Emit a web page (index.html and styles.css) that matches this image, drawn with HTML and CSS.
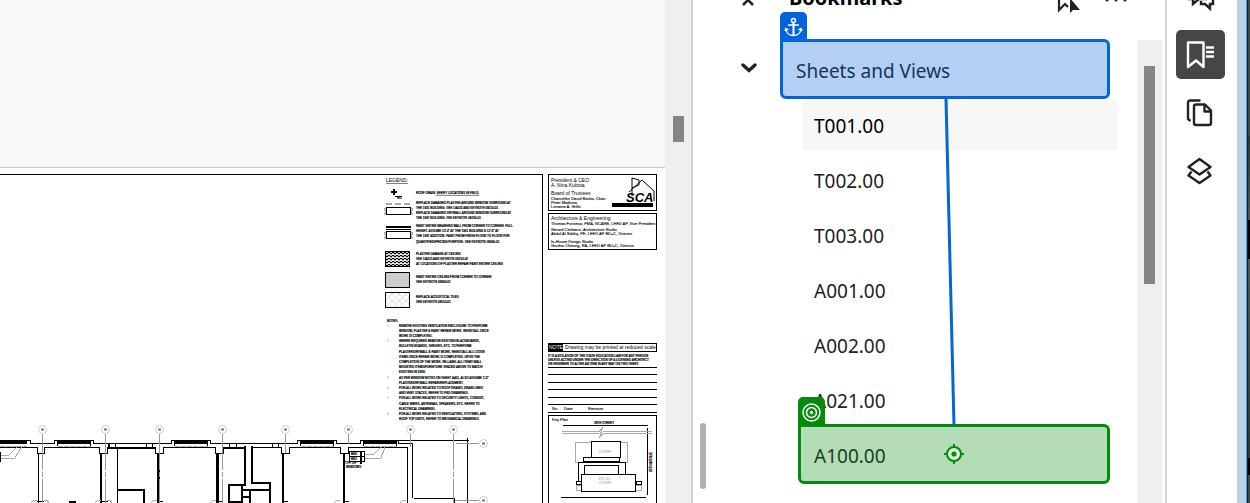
FILE: index.html
```html
<!DOCTYPE html>
<html lang="en">
<head>
<meta charset="utf-8">
<title>Bookmarks</title>
<link rel="stylesheet" href="styles.css">
</head>
<body>
<div class="app">
  <main class="document">
    <div class="sheet">
      <svg class="drawing" width="665" height="335" viewBox="0 168 665 335" role="img" aria-label="Construction drawing sheet">
        <defs>
          <pattern id="plaster" width="4" height="3" patternUnits="userSpaceOnUse"><path d="M0 .5h2M2 1.5h2" stroke="#000" stroke-width="1.4"/></pattern>
          <pattern id="tile" width="7" height="7" patternUnits="userSpaceOnUse"><path d="M0 0l7 7M7 0l-7 7" stroke="#ddd" stroke-width="1"/></pattern>
        </defs>
        <g class="ink">
          <path d="M0 174.5H542.5V503"/>
          <path d="M548.5 174.5h108v36h-108zM548.5 213.5h108v36h-108zM548.5 343.5h108v8h-108zM548.5 503v-87.500h108V503"/>
          <path d="M548 367.500h109M548 374.500h109M548 382.500h109M548 389.500h109M548 397.500h109M548 404.500h109M548 412.500h109"/>
        </g>

        <g class="ink">
          <path d="M386.500 207.500h24v7h-24zM386.500 231.500h24v7h-24zM386 229.500h25"/>
          <path class="heavy" d="M386 227h25M391 192h6M394 189v6"/>
          <path d="M395 196.500h7"/>
          <path class="gray heavy" d="M386 204h25" stroke-dasharray="6 3"/>
          <path class="gray" d="M386 208l-2 1 2 3-2 3M411 208l2 1-2 3 2 3M386 232l-2 1 2 3-2 3M411 232l2 1-2 3 2 3"/>
          <rect x="385.500" y="251.500" width="24" height="15" fill="url(#plaster)"/>
          <rect x="385.500" y="272.500" width="24" height="15" fill="#ccc"/>
          <rect x="385.500" y="292.500" width="24" height="15" fill="url(#tile)"/>
        </g>
        <text class="label" x="386" y="182" text-decoration="underline">LEGEND:</text>
        <text class="tiny" x="397" y="199">RD</text>
        <text class="tiny"><tspan x="416" y="194">ROOF DRAIN. </tspan><tspan text-decoration="underline">VERIFY LOCATIONS IN FIELD.</tspan></text>
        <text class="tiny">
          <tspan x="416" y="204">REPLACE DAMAGED PLASTER AROUND WINDOW SURROUND AT</tspan>
          <tspan x="416" y="209">THE 1931 BUILDING. SEE 1/A023 AND KEYNOTE 09210-01</tspan>
          <tspan x="416" y="214">REPLACE DAMAGED DRYWALL AROUND WINDOW SURROUND AT</tspan>
          <tspan x="416" y="219">THE 1997 BUILDING. SEE KEYNOTE 09250-01</tspan>
          <tspan x="416" y="227">PAINT ENTIRE WEARHED WALL FROM CORNER TO CORNER. FULL</tspan>
          <tspan x="416" y="232">HEIGHT. ASSUME 13'-0" AT THE 1931 BUILDING &amp; 12'-6" AT</tspan>
          <tspan x="416" y="237">THE 1997 ADDITION. PAINT FROM FINISH FLOOR TO FLOOR FOR</tspan>
          <tspan x="416" y="243">QUANTIFIED/PRICING PURPOSE. SEE KEYNOTE 09900-01</tspan>
          <tspan x="416" y="255">PLASTER DAMAGE AT CEILING</tspan>
          <tspan x="416" y="260">SEE 1/A023 AND KEYNOTE 09210-02</tspan>
          <tspan x="416" y="265">AT LOCATIONS OF PLASTER REPAIR PAINT ENTIRE CEILING</tspan>
          <tspan x="416" y="278">PAINT ENTIRE CEILING FROM CORNER TO CORNER</tspan>
          <tspan x="416" y="283">SEE KEYNOTE 09900-01</tspan>
          <tspan x="416" y="298">REPLACE ACOUSTICAL TILES</tspan>
          <tspan x="416" y="303">SEE KEYNOTE 09510-01</tspan>
        </text>
        <text class="tiny">
          <tspan x="387" y="322">NOTES:</tspan>
          <tspan x="399" y="327">REMOVE EXISTING VENTILATION ENCLOSURE TO PERFORM</tspan>
          <tspan x="399" y="332">WINDOW, PLASTER &amp; PAINT REPAIR WORK. REINSTALL ONCE</tspan>
          <tspan x="399" y="337">WORK IS COMPLETED.</tspan>
          <tspan x="399" y="342">WHERE REQUIRED REMOVE EXISTING BLACKBOARDS,</tspan>
          <tspan x="399" y="347">BULLETIN BOARDS, SHELVES, ETC. TO PERFORM</tspan>
          <tspan x="399" y="353">PLASTER/DRYWALL &amp; PAINT WORK. REINSTALL ALL LOOSE</tspan>
          <tspan x="399" y="358">ITEMS ONCE REPAIR WORK IS COMPLETED. UPON THE</tspan>
          <tspan x="399" y="363">COMPLETION OF THE WORK. RE-LABEL ALL ITEMS WALL</tspan>
          <tspan x="399" y="368">MOUNTED ITEMS/FURNITURE SPACED ABOVE TO MATCH</tspan>
          <tspan x="399" y="373">EXISTING IN KIND.</tspan>
          <tspan x="399" y="379">AS PER WINDOW NOTES ON SHEET A401, ALSO ASSUME 1'-0"</tspan>
          <tspan x="399" y="384">PLASTER/DRYWALL REPAIR/REPLACEMENT.</tspan>
          <tspan x="399" y="389">FOR ALL WORK RELATED TO ROOF DRAINS, DRAIN LINES</tspan>
          <tspan x="399" y="394">AND VENT STACKS, REFER TO P&amp;D DRAWINGS.</tspan>
          <tspan x="399" y="399">FOR ALL WORK RELATED TO SECURITY LIGHTS, CONDUIT,</tspan>
          <tspan x="399" y="405">CABLE WIRES, ANTENNAS, SPEAKERS, ETC. REFER TO</tspan>
          <tspan x="399" y="410">ELECTRICAL DRAWINGS.</tspan>
          <tspan x="399" y="415">FOR ALL WORK RELATED TO VENTILATORS, SYSTEMS, AND</tspan>
          <tspan x="399" y="420">ROOF TOP UNITS, REFER TO MECHANICAL DRAWINGS.</tspan>
        </text>
        <text class="tiny faint"><tspan x="387" y="327">1.</tspan><tspan x="387" y="342">2.</tspan><tspan x="387" y="379">3.</tspan><tspan x="387" y="389">4.</tspan><tspan x="387" y="399">5.</tspan><tspan x="387" y="415">6.</tspan></text>

        <text class="small">
          <tspan x="551" y="182">President &amp; CEO</tspan><tspan x="551" y="187">A. Nina Kubota</tspan>
          <tspan x="551" y="195">Board of Trustees</tspan>
        </text>
        <text class="credit">
          <tspan x="551" y="200">Chancellor David Banks, Chair</tspan>
          <tspan x="551" y="204">Peter Madonia</tspan><tspan x="551" y="208">Lorraine A. Grillo</tspan>
        </text>
        <path d="M632 196V178l7 2v5l-7 3M629 192l13-12 12 11v10" fill="none" stroke="#000"/>
        <text class="logo" x="626" y="202">SCA</text>
        <path d="M612 203h41v4h-41z"/>
        <text class="small" x="551" y="220">Architecture &amp; Engineering</text>
        <text class="credit">
          <tspan x="551" y="225">Thomas Fonseca, PMA, NCARB, LEED AP, Vice President</tspan>
          <tspan x="551" y="231">Gerard Cimbarro, Architecture Studio</tspan>
          <tspan x="551" y="235">Abdul Al Siddiq, PE, LEED AP BD+C, Director</tspan>
          <tspan x="551" y="243">In-House Design Studio</tspan>
          <tspan x="551" y="247">Gordon Cheung, RA, LEED AP BD+C, Director</tspan>
        </text>
        <path d="M549 344h14v7h-14z"/>
        <text class="label"><tspan x="549" y="349" fill="#fff">NOTE</tspan><tspan x="565" y="349">Drawing may be printed at reduced scale</tspan></text>
        <text class="tiny">
          <tspan x="548" y="357">IT IS A VIOLATION OF THE STATE EDUCATION LAW FOR ANY PERSON</tspan>
          <tspan x="548" y="361">UNLESS ACTING UNDER THE DIRECTION OF A LICENSED ARCHITECT</tspan>
          <tspan x="548" y="365">OR ENGINEER TO ALTER AN ITEM IN ANY WAY ON THIS SHEET.</tspan>
        </text>
        <text class="credit">
          <tspan x="552" y="410">No.</tspan><tspan x="564" y="410">Date</tspan><tspan x="588" y="410">Revision</tspan>
          <tspan x="552" y="421">Key Plan</tspan>
        </text>
        <text class="tiny" x="594" y="424">39TH STREET</text>
        <text class="tiny" transform="translate(652 472) rotate(-90)">35TH AVENUE</text>

        <g class="ink">
          <path d="M563 425.500h84.500M647.500 428v67M561 497.500h85"/>
          <path class="gray" d="M562 431.500h37l3-3-2 8 3-3h49M562 433.500h37M603 431.500h49M591 442.500h-15.500v19.500h7M621 442.500h6.500v19.500h-7"/>
          <path d="M591.500 441.500h29v16h-29zM583.500 457.500h36v4h-36zM578.500 481v-19h47v12M584.500 465.500h34v9h-34zM581.500 474.500h54v17h-54zM576 481.500h5v3h-5M576 481v4M641 481.500h-5v3h5v-4"/>
          <path class="gray" d="M581 485h-5v5h5M636 485h5v5h-5"/>
        </g>
        <text class="tiny faint"><tspan x="599" y="453">5 STORY</tspan><tspan x="599" y="480">P.S. 151</tspan><tspan x="599" y="484">4 STORY</tspan></text>

        <g class="ink">
          <path d="M0 440.500h30.500v3h24v-3h39v3h78v-3h39v3h87v-3h39v3h24v-3h38v3h14v54.500"/>
          <path d="M0 447.500h37.500v6h7v-6h55v6h8v-6h48v6h8v-6h52v6h8v-6h21M251 447.500h30.500v6h8v-6h51v6h8v-6h59V503M398.500 440.500h70M467.500 438v65M413.500 498.500h41v5"/>
          <path d="M117.500 448v55M108 448.500h48M224 448.500h21M38.500 453v50M108 444v4M115.500 443.500v4h-6v-4M152.500 443.500v4h-6v-4M236.500 443.500v4h-7v-4M278.500 443.500v4h-6v-4"/>
          <path class="wall" d="M158.500 453v50M217.500 453v50M0 442.500h27M57 442.500h34M174 442.500h34M300 442.500h34M363 442.500h34"/>
          <path class="heavy" d="M101 453v50M283 453v50M344 453v50M118 490h26v13M245 446v39h-16v17h13v-17M252 446v37h18v20M242 490h28M242 497h8v-7M250 497v6M0 452v10M69 502h7"/>
          <path class="gray" d="M0 446.500h27M58 446.500h33M175 446.500h33M301 446.500h33M364 446.500h33" stroke-dasharray="5 1"/>
          <path d="M57.500 443v3M90.500 443v3M174.500 443v3M207.500 443v3M300.500 443v3M333.500 443v3M363.500 443v3M396.500 443v3"/>
          <path class="gray" d="M18 446l-9 9H1M22 446l-7 12H1M381 447l-7 7h-9M385 447l-4 11h-16"/>
          <path d="M349.500 451.500h15v10h-15zM349 456.500h15M361.500 452v12M360.500 452v12M37 501.500h7M102 501.500h6M158 501.500h5M217 501.500h5M283 501.500h5M344 501.500h5"/>
          <path class="gray" d="M31 503q2-3 6-3M44 500q4 0 5 3M95 503q2-3 6-3M107 500q4 0 5 3M151 503q2-3 6-3M210 503q2-3 6-3M334 503q2-3 6-3M400 503q2-3 6-3"/>
        </g>
        <text class="tiny"><tspan x="351" y="455">M60</tspan><tspan x="351" y="460">M62</tspan><tspan x="345" y="464">TYP. OF</tspan><tspan x="346" y="468">WINDOWS</tspan></text>
        <g class="grid">
          <path d="M42.500 434v69M105.500 434v69M159.500 434v69M222.500 434v69M453.500 434v69" stroke-dasharray="36 2 5 2"/>
          <path d="M285.500 434v19M348.500 434v10M410.500 434v13M456 443.500h23M455 500.500h24"/>
          <g class="bubble"><circle cx="42.500" cy="429.500" r="4"/><circle cx="105.500" cy="429.500" r="4"/><circle cx="159.500" cy="429.500" r="4"/><circle cx="222.500" cy="429.500" r="4"/><circle cx="285.500" cy="429.500" r="4"/><circle cx="348.500" cy="429.500" r="4"/><circle cx="410.500" cy="429.500" r="4"/><circle cx="453.500" cy="429.500" r="4"/><circle cx="483.500" cy="443.500" r="4"/><circle cx="483.500" cy="500.500" r="4"/></g>
          <path class="mark" d="M41 429.500h3M104 429.500h3M158 429.500h3M221 429.500h3M284 429.500h3M347 429.500h3M409 429.500h3M452 429.500h3M482 443.500h3M482 500.500h3"/>
        </g>
      </svg>
    </div>
    <div class="doc-scroll"><div class="doc-thumb"></div></div>
  </main>

  <aside class="panel">
    <header class="panel-header">
      <button class="icon-button close" aria-label="Close"><svg width="14" height="14" viewBox="0 0 14 14"><path d="M2 2l10 10M12 2L2 12" fill="none" stroke="#222" stroke-width="2.500"/></svg></button>
      <h2 class="title">Bookmarks</h2>
      <button class="icon-button find" aria-label="Find current bookmark"><svg width="24" height="28" viewBox="0 0 24 28"><path d="M11 21l-3-3-6 6V3h16v9" fill="none" stroke="#222" stroke-width="2.200"/><path d="M13 12v15l3-3h7z" fill="#222"/></svg></button>
      <button class="icon-button more" aria-label="More options"><svg width="22" height="4" viewBox="0 0 22 4" fill="#222"><circle cx="2" cy="2" r="1.600"/><circle cx="11" cy="2" r="1.600"/><circle cx="20" cy="2" r="1.600"/></svg></button>
    </header>
    <div class="panel-body">
      <div class="handle"></div>
      <ul class="tree">
        <li class="row root">
          <button class="icon-button toggle" aria-label="Collapse Sheets and Views"><svg width="16" height="10" viewBox="0 0 16 10"><path d="M2 2l6 5.500L14 2" fill="none" stroke="#222" stroke-width="3.400" stroke-linecap="round"/></svg></button>
          <a class="entry" href="#sheets">Sheets and Views</a>
          <div class="mark-box anchor-box"><span class="badge"><svg width="19" height="21" viewBox="0 0 19 21" fill="none" stroke="#fff"><circle cx="9.500" cy="3.500" r="2" stroke-width="1.500"/><path d="M9.500 6v13" stroke-width="2"/><path d="M4 8h11M2 12c.5 4 3.500 6.500 7.500 6.500S16.500 16 17 12M1 14l1-2.500 2.500 1.500M18 14l-1-2.500-2.500 1.500" stroke-width="1.400"/></svg></span></div>
        </li>
        <li class="row"><a class="entry child current" href="#t001">T001.00</a></li>
        <li class="row"><a class="entry child" href="#t002">T002.00</a></li>
        <li class="row"><a class="entry child" href="#t003">T003.00</a></li>
        <li class="row"><a class="entry child" href="#a001">A001.00</a></li>
        <li class="row"><a class="entry child" href="#a002">A002.00</a></li>
        <li class="row"><a class="entry child" href="#a021">A021.00</a></li>
        <li class="row">
          <a class="entry child" href="#a100">A100.00</a>
          <div class="mark-box target-box"><span class="badge"><svg width="21" height="21" viewBox="0 0 21 21" fill="none" stroke="#fff" stroke-width="1.500"><circle cx="10.500" cy="10.500" r="8.500"/><circle cx="10.500" cy="10.500" r="5"/><circle cx="10.500" cy="10.500" r="1" fill="#fff"/></svg></span>
          <svg class="aim" width="22" height="22" viewBox="0 0 22 22"><circle cx="11" cy="11" r="7" fill="#dcf0dc" stroke="#058b0c" stroke-width="2"/><path d="M11 1v4M11 17v4M1 11h4M17 11h4" stroke="#058b0c" stroke-width="2"/><circle cx="11" cy="11" r="2.600" fill="#058b0c"/></svg></div>
        </li>
      </ul>
      <svg class="connector" width="12" height="326" viewBox="0 0 12 326" aria-hidden="true"><path d="M2 0l8 326" stroke="#0265dc" stroke-width="3"/></svg>
      <div class="panel-scroll"><div class="panel-thumb"></div></div>
    </div>
  </aside>

  <nav class="rail" aria-label="Panels">
    <button class="rail-button" aria-label="Comments"><svg width="30" height="30" viewBox="0 0 30 30" fill="none" stroke="#222" stroke-width="2.400"><path d="M3 6h17v11h-7l-6 5v-5H3z"/><path d="M24 12h3v10h-3v4.500l-5-4.500h-4v-3"/></svg></button>
    <button class="rail-button active" aria-label="Bookmarks"><svg width="30" height="30" viewBox="0 0 30 30" fill="none" stroke="#fff" stroke-width="2.400"><path d="M2 2.500h15.500V27L10 20.500 2 27z" stroke-linejoin="round"/><path d="M20 7.500h8M20 12h8M20 16.500h8"/></svg></button>
    <button class="rail-button" aria-label="Pages"><svg width="30" height="30" viewBox="0 0 30 30" fill="none" stroke="#222" stroke-width="2.400"><path d="M14.500 2.500H4a2 2 0 0 0-2 2V21l2.500 2M10 6.500h9l6 6v12.500a2 2 0 0 1-2 2H10a2 2 0 0 1-2-2V8.500a2 2 0 0 1 2-2zM18.500 7v6.500h6" stroke-linejoin="round"/></svg></button>
    <button class="rail-button" aria-label="Layers"><svg width="30" height="30" viewBox="0 0 30 30" fill="none" stroke="#222" stroke-width="2.400" stroke-linejoin="round"><path d="M13.500 3l11 8-11 7.500-11-7.500z"/><path d="M5.500 15.500l-3 4 11 7.500 11-7.500-3-4"/></svg></button>
  </nav>
  <div class="window-edge"></div>
  <div class="desktop"></div>
</div>
</body>
</html>
```
FILE: styles.css
```css
* { box-sizing: border-box; }
body { margin: 0; font-family: "Noto Sans", "Open Sans", sans-serif; font-size: 19px; color: #222; }
button { padding: 0; border: 0; background: none; display: flex; align-items: center; justify-content: center; }
a { color: inherit; text-decoration: none; }

.app { display: flex; height: 100vh; overflow: hidden; background: #fff; }

.document { flex: 1; min-width: 0; display: flex; background: #f8f8f8; }
.sheet { flex: 1; min-width: 0; display: flex; justify-content: flex-end; margin-top: 167px; border-top: 1px solid #c8c8c8; background: #fff; overflow: hidden; }
.drawing { flex: none; }
.doc-scroll { width: 26px; padding: 116px 7px 0 8px; background: #efefef; }
.doc-thumb { height: 26px; background: #858585; }

.ink { fill: none; stroke: #000; stroke-width: 1; shape-rendering: crispEdges; }
.ink .heavy { stroke-width: 2; }
.ink .wall { stroke-width: 3; }
.ink .gray { stroke: #aaa; }
.tiny { font: 3px "Liberation Sans", sans-serif; stroke: #000; stroke-width: .2; }
.credit { font: 4px "Liberation Sans", sans-serif; stroke: #000; stroke-width: .1; }
.small { font: 5px "Liberation Sans", sans-serif; }
.label { font: 5px "Liberation Sans", sans-serif; }
.faint { fill: #888; stroke: none; }
.logo { font: italic bold 13px "Liberation Sans", sans-serif; }
.grid { fill: none; stroke: #999; }
.bubble { fill: #fff; stroke: #ccc; }
.grid .mark { stroke: #777; stroke-width: 2; }

.panel { width: 476px; display: flex; flex-direction: column; border-left: 2px solid #d4d4d4; border-right: 2px solid #d4d4d4; }
.panel-header { height: 80px; margin-top: -40px; display: flex; flex: none; align-items: center; padding: 0 38px 0 47px; }
.close { width: 16px; }
.title { flex: 1; margin: 0 0 4px 33px; font-size: 20px; line-height: 24px; color: #000; }
.find { margin-right: 24px; }
.panel-body { position: relative; flex: 1; min-height: 0; display: flex; padding-right: 3px; }
.handle { width: 6px; height: 66px; margin: 383px 0 0 7px; border-radius: 3px; background: #b1b1b1; }
.tree { flex: 1; margin: 0; padding: 3px 19px 0 35px; list-style: none; }
.row { position: relative; height: 55px; display: flex; align-items: center; }
.toggle { width: 16px; margin-right: 39px; margin-bottom: 6px; }
.entry { flex: 1; line-height: 26px; }
.child { margin-left: 61px; padding: 12px; border-radius: 5px; }
.current { background: #f7f7f7; color: #000; }
.mark-box { position: absolute; top: -4px; right: 8px; bottom: -1px; border: 3px solid; border-radius: 6px; pointer-events: none; }
.anchor-box { left: 39px; border-color: #0265dc; border-top-left-radius: 0; background: rgb(2 101 220 / 30%); }
.target-box { left: 57px; border-color: #058b0c; border-top-left-radius: 0; background: rgb(5 139 12 / 30%); display: flex; align-items: center; justify-content: center; }
.badge { position: absolute; left: -3px; bottom: 100%; width: 27px; height: 30px; display: flex; align-items: center; justify-content: center; border-radius: 5px 5px 0 0; }
.anchor-box .badge { background: #0265dc; }
.target-box .badge { background: #058b0c; }
.connector { position: absolute; left: 251px; top: 59px; }
.panel-scroll { width: 25px; padding: 26px 7px 0; background: #efefef; }
.panel-thumb { height: 218px; background: #858585; }

.rail { width: 70px; margin-top: -28px; display: flex; flex-direction: column; align-items: center; gap: 9px; padding-right: 3px; }
.rail-button { width: 49px; height: 49px; flex: none; border-radius: 5px; }
.active { background: #464646; }
.window-edge { width: 10px; background: #b9d1ea; border-right: 1px solid #20b8e8; }
.desktop { width: 3px; border-left: 1px solid #111; background: linear-gradient(#444 0 136px, #333 136px, #555 220px, #000 220px 259px, #555 259px, #333 458px, #000 458px 475px, #444 475px); }
```
